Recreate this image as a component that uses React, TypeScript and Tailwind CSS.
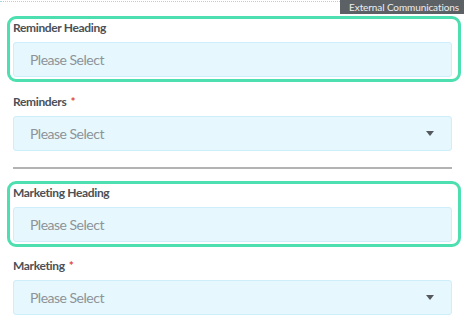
import React from "react";

function Label({ text, required }: { text: string; required?: boolean }) {
  return (
    <div className="h-4 text-[12px] leading-4 font-bold tracking-[-0.35px] text-[#4b5056]">
      {text}
      {required && <span className="ml-[4px] text-[#e0434a]">*</span>}
    </div>
  );
}

function Field({ select }: { select?: boolean }) {
  return (
    <div className="mt-[6px] flex h-[35px] items-center justify-between rounded-[3px] border border-[#cdeefa] bg-[#e6f8fd] pl-4 pr-[17px]">
      <span className="text-[14px] tracking-[-0.5px] text-[#8d9399]">Please Select</span>
      {select && (
        <svg width="8" height="5" viewBox="0 0 8 5" className="fill-[#55595e]">
          <path d="M0 0h8L4 5z" />
        </svg>
      )}
    </div>
  );
}

function Highlight({ children }: { children: React.ReactNode }) {
  return (
    <div className="ml-[-6px] mr-[-9px] rounded-[9px] border-[3px] border-[#4ddfb0] pb-[2px] pl-[3px] pr-[6px] pt-[1px]">
      {children}
    </div>
  );
}

export default function App() {
  return (
    <div className="relative h-[333px] w-[464px] overflow-hidden bg-white font-['Lato',sans-serif]">
      <div className="mt-[1px] border-t border-dotted border-[#9fd6ee]" />
      <div className="absolute right-0 top-0 h-[14px] bg-[#5c6166] pl-[9px] pr-[5px] text-[10px] leading-[15px] tracking-[-0.1px] text-[#eceeef]">
        External Communications
      </div>
      <div className="pl-[13px] pr-[12px] pt-[14px]">
        <Highlight>
          <Label text="Reminder Heading" />
          <Field />
        </Highlight>
        <div className="mt-[12px]">
          <Label text="Reminders" required />
          <Field select />
        </div>
        <div className="mt-4 border-t-2 border-[#b3b3b3]" />
        <div className="mt-[12px]">
          <Highlight>
            <Label text="Marketing Heading" />
            <Field />
          </Highlight>
        </div>
        <div className="mt-[11px]">
          <Label text="Marketing" required />
          <Field select />
        </div>
      </div>
    </div>
  );
}
